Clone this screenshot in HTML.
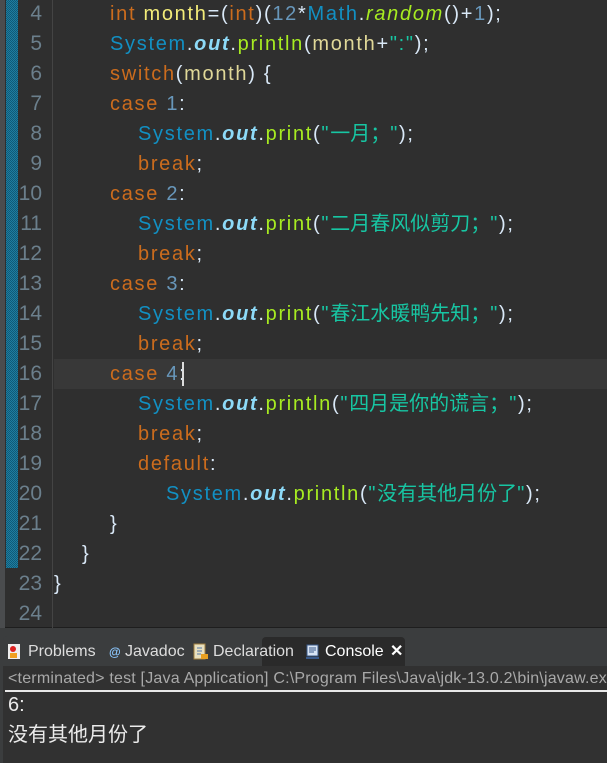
<!DOCTYPE html>
<html><head><meta charset="utf-8"><style>
*{margin:0;padding:0;box-sizing:border-box}
body{width:607px;height:763px;overflow:hidden;background:#3b3d3e;font-family:"Liberation Sans","Noto Sans CJK SC",sans-serif;position:relative}
#ed{position:absolute;left:0;top:0;width:607px;height:628px;background:#2f2f2f;border-bottom-left-radius:6px;border-bottom:1px solid #1e1e1e}
#strip{position:absolute;left:0;top:0;width:5px;height:628px;background:#4a4c4e}
#blue{position:absolute;left:6px;top:0;width:12px;height:568px;background:repeating-conic-gradient(#1f7ea0 0 25%,#0f5a78 0 50%) 0 0/2px 2px}
#gut{position:absolute;left:52px;top:0;width:1px;height:628px;background:#444}
#hl{position:absolute;left:54px;top:359px;width:553px;height:30px;background:#383838}
.n{position:absolute;left:0;width:42px;text-align:right;color:#6b7f8c;font-size:21px;line-height:30px}
.l{position:absolute;font-size:20px;line-height:30px;color:#d9e8f7;white-space:pre;letter-spacing:1.7px}
.z{letter-spacing:0}
.k{color:#cc6c1d}.v{color:#f3ec79}.v2{color:#e0d898}.s{color:#1290c3}.o{color:#8ddaf8;font-weight:bold;font-style:italic}.m{color:#a7ec21}.r{color:#a7ec21;font-style:italic}.q{color:#17c6a3}.d{color:#6897bb}
#cur{position:absolute;left:182px;top:362px;width:2px;height:24px;background:#ddd}
#tabs{position:absolute;left:3px;top:636px;width:604px;height:30px;background:#3b3d3e;border-top-left-radius:4px}
.t{position:absolute;top:638px;height:28px;line-height:28px;font-size:16px;color:#ddd}
#con{position:absolute;left:262px;top:637px;width:143px;height:29px;background:#2a2a2a;border-radius:4px 4px 0 0}
#body{position:absolute;left:3px;top:666px;width:604px;height:97px;background:#313131}
#hdr{position:absolute;left:8px;top:668px;font-size:16px;color:#a9a9a9;white-space:nowrap;line-height:22px;letter-spacing:0.2px}
#ul{position:absolute;left:5px;top:690px;width:602px;height:2px;background:#e8e8e8}
.c{position:absolute;left:8px;font-size:20px;color:#ebebeb;line-height:30px}
</style></head><body>
<div id="ed"></div><div id="strip"></div><div id="blue"></div><div id="gut"></div><div id="hl"></div>
<div class="n" style="top:-1px">4</div><div class="n" style="top:29px">5</div><div class="n" style="top:59px">6</div><div class="n" style="top:89px">7</div><div class="n" style="top:119px">8</div><div class="n" style="top:149px">9</div><div class="n" style="top:179px">10</div><div class="n" style="top:209px">11</div><div class="n" style="top:239px">12</div><div class="n" style="top:269px">13</div><div class="n" style="top:299px">14</div><div class="n" style="top:329px">15</div><div class="n" style="top:359px">16</div><div class="n" style="top:389px">17</div><div class="n" style="top:419px">18</div><div class="n" style="top:449px">19</div><div class="n" style="top:479px">20</div><div class="n" style="top:509px">21</div><div class="n" style="top:539px">22</div><div class="n" style="top:569px">23</div><div class="n" style="top:599px">24</div>
<div class="l" style="left:110px;top:-1px"><span class="k">int</span> <span class="v">month</span>=(<span class="k">int</span>)(<span class="d">12</span>*<span class="s">Math</span>.<span class="r">random</span>()+<span class="d">1</span>);</div>
<div class="l" style="left:110px;top:29px"><span class="s">System</span>.<span class="o">out</span>.<span class="m">println</span>(<span class="v2">month</span>+<span class="q">":"</span>);</div>
<div class="l" style="left:110px;top:59px"><span class="k">switch</span>(<span class="v2">month</span>) {</div>
<div class="l" style="left:110px;top:89px"><span class="k">case</span> <span class="d">1</span>:</div>
<div class="l" style="left:138px;top:119px"><span class="s">System</span>.<span class="o">out</span>.<span class="m">print</span>(<span class="q">"<span class="z">一月；</span>"</span>);</div>
<div class="l" style="left:138px;top:149px"><span class="k">break</span>;</div>
<div class="l" style="left:110px;top:179px"><span class="k">case</span> <span class="d">2</span>:</div>
<div class="l" style="left:138px;top:209px"><span class="s">System</span>.<span class="o">out</span>.<span class="m">print</span>(<span class="q">"<span class="z">二月春风似剪刀；</span>"</span>);</div>
<div class="l" style="left:138px;top:239px"><span class="k">break</span>;</div>
<div class="l" style="left:110px;top:269px"><span class="k">case</span> <span class="d">3</span>:</div>
<div class="l" style="left:138px;top:299px"><span class="s">System</span>.<span class="o">out</span>.<span class="m">print</span>(<span class="q">"<span class="z">春江水暖鸭先知；</span>"</span>);</div>
<div class="l" style="left:138px;top:329px"><span class="k">break</span>;</div>
<div class="l" style="left:110px;top:359px"><span class="k">case</span> <span class="d">4</span>:</div>
<div id="cur"></div>
<div class="l" style="left:138px;top:389px"><span class="s">System</span>.<span class="o">out</span>.<span class="m">println</span>(<span class="q">"<span class="z">四月是你的谎言；</span>"</span>);</div>
<div class="l" style="left:138px;top:419px"><span class="k">break</span>;</div>
<div class="l" style="left:138px;top:449px"><span class="k">default</span>:</div>
<div class="l" style="left:166px;top:479px"><span class="s">System</span>.<span class="o">out</span>.<span class="m">println</span>(<span class="q">"<span class="z">没有其他月份了</span>"</span>);</div>
<div class="l" style="left:110px;top:509px">}</div>
<div class="l" style="left:82px;top:539px">}</div>
<div class="l" style="left:54px;top:569px">}</div>
<div id="tabs"></div><div id="con"></div>
<svg style="position:absolute;left:7px;top:643px" width="16" height="18"><rect x="1" y="1" width="12" height="15" fill="#eee"/><circle cx="6" cy="6" r="3" fill="#d22"/><rect x="3" y="10" width="7" height="5" fill="#f0a020"/></svg>
<div class="t" style="left:28px">Problems</div>
<div class="t" style="left:109px;font-size:12px;color:#8cc8ff;font-weight:bold">@</div>
<div class="t" style="left:125px">Javadoc</div>
<svg style="position:absolute;left:193px;top:643px" width="16" height="18"><rect x="1" y="1" width="11" height="15" fill="#e8e0c0" stroke="#a08040"/><path d="M4 5h5M4 8h5M4 11h4" stroke="#5577aa"/><rect x="8" y="11" width="7" height="5" fill="#e8a020"/></svg>
<div class="t" style="left:213px">Declaration</div>
<svg style="position:absolute;left:305px;top:644px" width="16" height="16"><rect x="2" y="1" width="11" height="11" fill="#d8e4f4" stroke="#3a5a8a"/><path d="M4 4h7M4 6h7M4 8h5" stroke="#3a5a8a"/><rect x="1" y="13" width="13" height="2" fill="#3a5a8a"/></svg>
<div class="t" style="left:325px;color:#fff">Console</div>
<div class="t" style="left:390px;color:#fff;font-weight:bold">✕</div>
<div id="body"></div>
<div id="hdr">&lt;terminated&gt; test [Java Application] C:\Program Files\Java\jdk-13.0.2\bin\javaw.exe</div>
<div id="ul"></div>
<div class="c" style="top:690px">6:</div>
<div class="c" style="top:720px">没有其他月份了</div>
</body></html>
